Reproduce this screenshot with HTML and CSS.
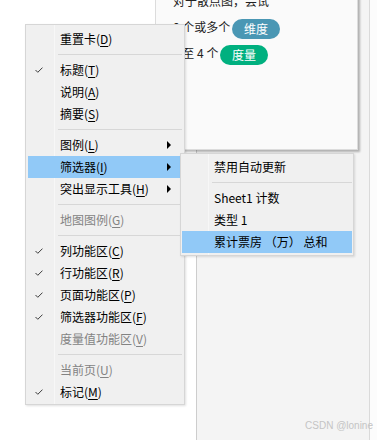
FILE: index.html
```html
<!DOCTYPE html>
<html lang="zh-CN">
<head>
    <meta charset="UTF-8">
    <title>智能显示 - 右键菜单</title>
    <link rel="stylesheet" href="styles.css">
</head>
<body>
    <!-- 背景：工作区 + 右侧窗格 -->
    <div class="screen">
        <div class="blank"></div>
        <div class="pane"></div>
        <div class="edge"></div>
    </div>

    <!-- 智能显示提示 -->
    <div class="showme">
        <div class="line">对于散点图，尝试</div>
        <div class="line">0 个或多个 <span class="pill dim">维度</span></div>
        <div class="line">2 至 4 个 <span class="pill mea">度量</span></div>
    </div>

    <!-- 主菜单 -->
    <div class="menu main">
        <div class="item"><span class="chk"></span><span class="txt">重置卡(<u>D</u>)</span></div>
        <div class="sep"></div>
        <div class="item"><span class="chk"><svg width="8" height="6" viewBox="0 0 8 6"><path d="M0.5 3 L2.8 5.3 L7.5 0.6" fill="none" stroke="#3c3c3c" stroke-width="1"/></svg></span><span class="txt">标题(<u>T</u>)</span></div>
        <div class="item"><span class="chk"></span><span class="txt">说明(<u>A</u>)</span></div>
        <div class="item"><span class="chk"></span><span class="txt">摘要(<u>S</u>)</span></div>
        <div class="sep"></div>
        <div class="item"><span class="chk"></span><span class="txt">图例(<u>L</u>)</span><span class="arrow"></span></div>
        <div class="item on"><span class="chk"></span><span class="txt">筛选器(<u>I</u>)</span><span class="arrow"></span></div>
        <div class="item"><span class="chk"></span><span class="txt">突出显示工具(<u>H</u>)</span><span class="arrow"></span></div>
        <div class="sep"></div>
        <div class="item off"><span class="chk"></span><span class="txt">地图图例(<u>G</u>)</span></div>
        <div class="sep"></div>
        <div class="item"><span class="chk"><svg width="8" height="6" viewBox="0 0 8 6"><path d="M0.5 3 L2.8 5.3 L7.5 0.6" fill="none" stroke="#3c3c3c" stroke-width="1"/></svg></span><span class="txt">列功能区(<u>C</u>)</span></div>
        <div class="item"><span class="chk"><svg width="8" height="6" viewBox="0 0 8 6"><path d="M0.5 3 L2.8 5.3 L7.5 0.6" fill="none" stroke="#3c3c3c" stroke-width="1"/></svg></span><span class="txt">行功能区(<u>R</u>)</span></div>
        <div class="item"><span class="chk"><svg width="8" height="6" viewBox="0 0 8 6"><path d="M0.5 3 L2.8 5.3 L7.5 0.6" fill="none" stroke="#3c3c3c" stroke-width="1"/></svg></span><span class="txt">页面功能区(<u>P</u>)</span></div>
        <div class="item"><span class="chk"><svg width="8" height="6" viewBox="0 0 8 6"><path d="M0.5 3 L2.8 5.3 L7.5 0.6" fill="none" stroke="#3c3c3c" stroke-width="1"/></svg></span><span class="txt">筛选器功能区(<u>F</u>)</span></div>
        <div class="item off"><span class="chk"></span><span class="txt">度量值功能区(<u>V</u>)</span></div>
        <div class="sep"></div>
        <div class="item off"><span class="chk"></span><span class="txt">当前页(<u>U</u>)</span></div>
        <div class="item"><span class="chk"><svg width="8" height="6" viewBox="0 0 8 6"><path d="M0.5 3 L2.8 5.3 L7.5 0.6" fill="none" stroke="#3c3c3c" stroke-width="1"/></svg></span><span class="txt">标记(<u>M</u>)</span></div>
    </div>

    <!-- 筛选器子菜单 -->
    <div class="menu sub">
        <div class="item"><span class="chk"></span><span class="txt">禁用自动更新</span></div>
        <div class="sep"></div>
        <div class="item"><span class="chk"></span><span class="txt">Sheet1 计数</span></div>
        <div class="item"><span class="chk"></span><span class="txt">类型 1</span></div>
        <div class="item on"><span class="chk"></span><span class="txt">累计票房 （万） 总和</span></div>
    </div>

    <div class="mark">CSDN @lonine</div>
</body>
</html>
```

FILE: styles.css
```css
body {
    margin: 0;
    background: #fff;
    font-family: "Noto Sans CJK SC", sans-serif;
    overflow: hidden;
}
.screen {
    display: flex;
    height: 440px;
}
.blank {
    width: 196px;
    flex: none;
}
.pane {
    width: 172px;
    flex: none;
    background: #f4f4f4;
    border-left: 1px solid #cdcdcd;
    border-right: 1px solid #dadada;
}
.edge {
    flex: 1;
    background: #fcfcfc;
}

/* 智能显示 */
.showme {
    position: absolute;
    left: 155px;
    top: -20px;
    width: 203px;
    height: 170px;
    box-sizing: border-box;
    padding: 7px 0 0 17px;
    background: #fafafa;
    border: 1px solid #dcdcdc;
    box-shadow: 2px 2px 2px rgba(0, 0, 0, 0.28);
    font-size: 12px;
    color: #222;
}
.line {
    height: 26px;
    line-height: 26px;
    white-space: nowrap;
}
.pill {
    display: inline-block;
    height: 20px;
    line-height: 20px;
    padding: 0 12px;
    border-radius: 10px;
    color: #fff;
    vertical-align: middle;
    margin-left: -1px;
}
.dim {
    background: #4a97b4;
}
.mea {
    background: #00b07f;
}

/* 菜单 */
.menu {
    position: absolute;
    box-sizing: border-box;
    background: #f0f0f0;
    border: 1px solid #d6d6d6;
    font-size: 12px;
    color: #000;
    box-shadow: 1px 1px 2px rgba(0, 0, 0, 0.12);
}
.main {
    left: 25px;
    top: 24px;
    width: 160px;
    padding: 3px 2px 1px;
    background: linear-gradient(to right, #f0f0f0 26px, #f7f7f7 26px, #f7f7f7 27px, #f0f0f0 27px);
    background-origin: content-box;
}
.sub {
    left: 180px;
    top: 153px;
    width: 174px;
    padding: 2px 1px;
    background: linear-gradient(to right, #f0f0f0 26px, #f7f7f7 26px, #f7f7f7 27px, #f0f0f0 27px);
    background-origin: content-box;
}
.item {
    display: flex;
    align-items: center;
    height: 22px;
    line-height: 22px;
    white-space: nowrap;
}
.item.on {
    background: #91c9f7;
}
.item.off {
    color: #838383;
}
.chk {
    width: 32px;
    flex: none;
    display: flex;
    align-items: center;
    padding-left: 7px;
    box-sizing: border-box;
}
.chk svg {
    display: block;
}
.txt {
    flex: 1;
}
u {
    text-underline-offset: 2px;
}
.arrow {
    width: 0;
    height: 0;
    margin-right: 11px;
    border-top: 4px solid transparent;
    border-bottom: 4px solid transparent;
    border-left: 4px solid #000;
}
.sep {
    height: 9px;
    margin-left: 30px;
    background: linear-gradient(#d7d7d7, #d7d7d7) 0 4px / 100% 1px no-repeat;
}
.sub .sep {
    margin-left: 30px;
}

.mark {
    position: absolute;
    right: 4px;
    bottom: 9px;
    font-family: "Liberation Sans", Arial, sans-serif;
    font-size: 10px;
    color: #c4c4c4;
}
```
